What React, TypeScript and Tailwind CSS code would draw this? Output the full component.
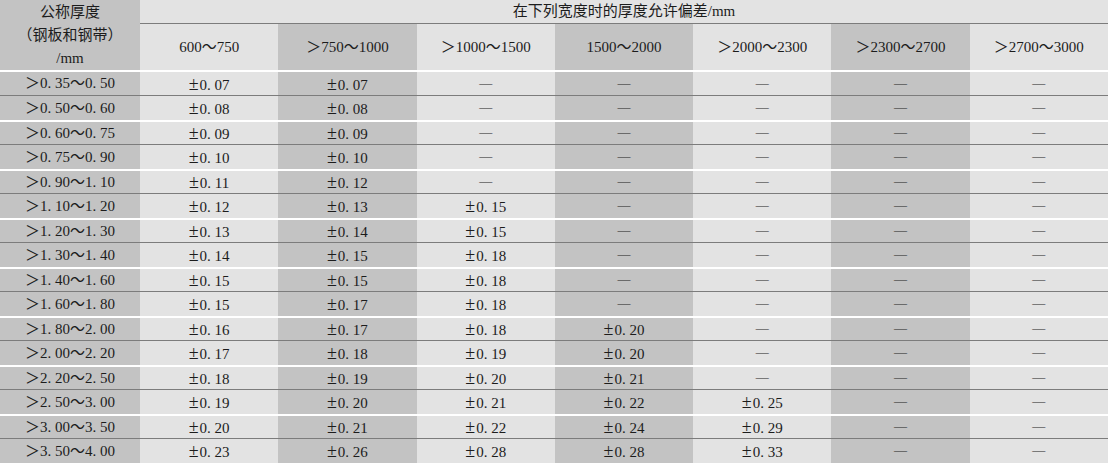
import React from "react";

const widths = ["600～750", "＞750～1000", "＞1000～1500", "1500～2000", "＞2000～2300", "＞2300～2700", "＞2700～3000"];

// thickness range, then tolerance per width column ("" = dash)
const rows: [string, string[]][] = [
  ["＞0. 35～0. 50", ["0. 07", "0. 07"]],
  ["＞0. 50～0. 60", ["0. 08", "0. 08"]],
  ["＞0. 60～0. 75", ["0. 09", "0. 09"]],
  ["＞0. 75～0. 90", ["0. 10", "0. 10"]],
  ["＞0. 90～1. 10", ["0. 11", "0. 12"]],
  ["＞1. 10～1. 20", ["0. 12", "0. 13", "0. 15"]],
  ["＞1. 20～1. 30", ["0. 13", "0. 14", "0. 15"]],
  ["＞1. 30～1. 40", ["0. 14", "0. 15", "0. 18"]],
  ["＞1. 40～1. 60", ["0. 15", "0. 15", "0. 18"]],
  ["＞1. 60～1. 80", ["0. 15", "0. 17", "0. 18"]],
  ["＞1. 80～2. 00", ["0. 16", "0. 17", "0. 18", "0. 20"]],
  ["＞2. 00～2. 20", ["0. 17", "0. 18", "0. 19", "0. 20"]],
  ["＞2. 20～2. 50", ["0. 18", "0. 19", "0. 20", "0. 21"]],
  ["＞2. 50～3. 00", ["0. 19", "0. 20", "0. 21", "0. 22", "0. 25"]],
  ["＞3. 00～3. 50", ["0. 20", "0. 21", "0. 22", "0. 24", "0. 29"]],
  ["＞3. 50～4. 00", ["0. 23", "0. 26", "0. 28", "0. 28", "0. 33"]],
];

const dark = "bg-[#c3c3c3]";
const light = "bg-[#e3e3e3]";

function Cell({ i, children }: { i: number; children: React.ReactNode }) {
  return (
    <div className={`flex-1 flex items-center justify-center ${i % 2 === 0 ? light : dark}`}>
      {children}
    </div>
  );
}

export default function App() {
  return (
    <div
      className="w-[1108px] bg-white text-[15px] text-[#1c1c1c] leading-none"
      style={{ fontFamily: '"Liberation Serif", "Noto Sans CJK SC", serif' }}
    >
      {/* header */}
      <div className="flex h-[70px]">
        <div className={`w-[140px] flex flex-col items-center justify-center leading-[23px] ${dark}`}>
          <span>公称厚度</span>
          <span>（钢板和钢带）</span>
          <span>/mm</span>
        </div>
        <div className="flex-1 flex flex-col">
          <div className={`h-[24px] flex items-center justify-center border-b border-[#7c7c7c] ${light}`}>
            在下列宽度时的厚度允许偏差/mm
          </div>
          <div className="flex-1 flex">
            {widths.map((w, i) => (
              <Cell key={w} i={i}>
                {w}
              </Cell>
            ))}
          </div>
        </div>
      </div>

      {/* body */}
      {rows.map(([range, vals], r) => (
        <div
          key={range}
          className={`flex ${r === 0 || r % 2 === 1 ? "h-[25px]" : "h-[24px]"} ${
            r % 2 === 0 ? "border-t-2 border-white" : "border-t border-[#7c7c7c]"
          }`}
        >
          <div className={`w-[140px] flex items-center justify-center ${dark}`}>{range}</div>
          {widths.map((w, i) => (
            <Cell key={w} i={i}>
              {vals[i] ? (
                <span className="flex items-baseline">
                  <span className="text-[18px] mr-px">±</span>
                  {vals[i]}
                </span>
              ) : (
                <span className="text-[13px] -mt-[3px]">—</span>
              )}
            </Cell>
          ))}
        </div>
      ))}
    </div>
  );
}
